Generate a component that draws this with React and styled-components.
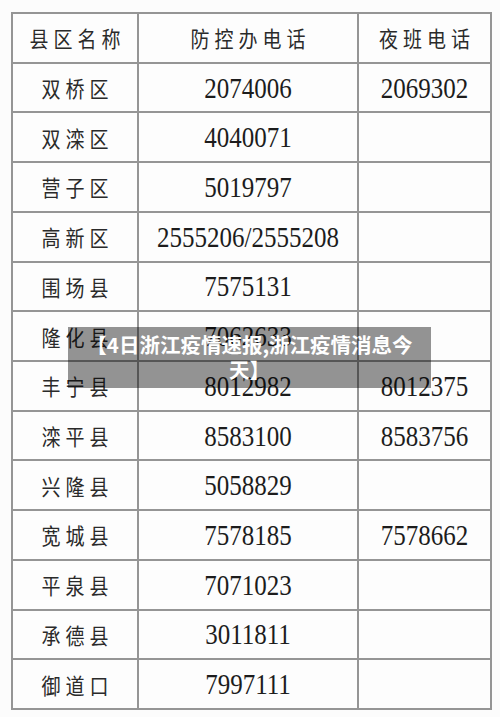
import React from 'react';
import styled, { createGlobalStyle } from 'styled-components';

const GlobalStyle = createGlobalStyle`
  html, body {
    margin: 0;
    padding: 0;
    background: #fcfcfc;
  }
  body {
    width: 500px;
    height: 717px;
    overflow: hidden;
    font-family: "Noto Sans CJK SC", "Noto Sans", sans-serif;
  }
`;

const rows = [
  ['双桥区', '2074006', '2069302'],
  ['双滦区', '4040071', ''],
  ['营子区', '5019797', ''],
  ['高新区', '2555206/2555208', ''],
  ['围场县', '7575131', ''],
  ['隆化县', '7062633', ''],
  ['丰宁县', '8012982', '8012375'],
  ['滦平县', '8583100', '8583756'],
  ['兴隆县', '5058829', ''],
  ['宽城县', '7578185', '7578662'],
  ['平泉县', '7071023', ''],
  ['承德县', '3011811', ''],
  ['御道口', '7997111', ''],
];

const App = () => {
  return (
    <Page>
      <GlobalStyle />
      <Table>
        <Cell><Label>县区名称</Label></Cell>
        <Cell><Label>防控办电话</Label></Cell>
        <Cell><Label>夜班电话</Label></Cell>
        {rows.map(([name, phone, night]) => (
          <React.Fragment key={name}>
            <Cell><Label>{name}</Label></Cell>
            <Cell><Num>{phone}</Num></Cell>
            <Cell>{night && <Num>{night}</Num>}</Cell>
          </React.Fragment>
        ))}
      </Table>
      <Banner>【4日浙江疫情速报,浙江疫情消息今天】</Banner>
    </Page>
  );
};

export default App;

const Page = styled.div`
  position: relative;
  width: 500px;
  height: 717px;
  padding: 12px 0 0 11px;
  box-sizing: border-box;
`;

const Table = styled.div`
  width: 481px;
  height: 698px;
  box-sizing: border-box;
  padding: 2px;
  display: grid;
  grid-template-columns: 124px 218px 1fr;
  grid-template-rows: repeat(14, 1fr);
  gap: 2px;
  background: #959595;
`;

const Cell = styled.div`
  background: #fdfdfd;
  display: flex;
  align-items: center;
  justify-content: center;
`;

const Label = styled.span`
  font-family: "Noto Sans CJK SC", sans-serif;
  font-size: 19px;
  letter-spacing: 5px;
  margin-right: -5px;
  color: #2a2a2a;
  display: inline-block;
  transform: scaleY(1.12);
`;

const Num = styled.span`
  font-family: "Liberation Serif", "Times New Roman", serif;
  font-size: 25px;
  color: #1c1c1c;
  display: inline-block;
  transform: scaleY(1.2);
`;

const Banner = styled.div`
  position: absolute;
  left: 68px;
  top: 327px;
  width: 363px;
  height: 61px;
  box-sizing: border-box;
  padding: 5px 14px;
  background: rgba(0, 0, 0, 0.42);
  color: #ffffff;
  font-family: "Noto Sans CJK SC", sans-serif;
  font-weight: 700;
  font-size: 20.5px;
  line-height: 25px;
  text-align: center;
`;
